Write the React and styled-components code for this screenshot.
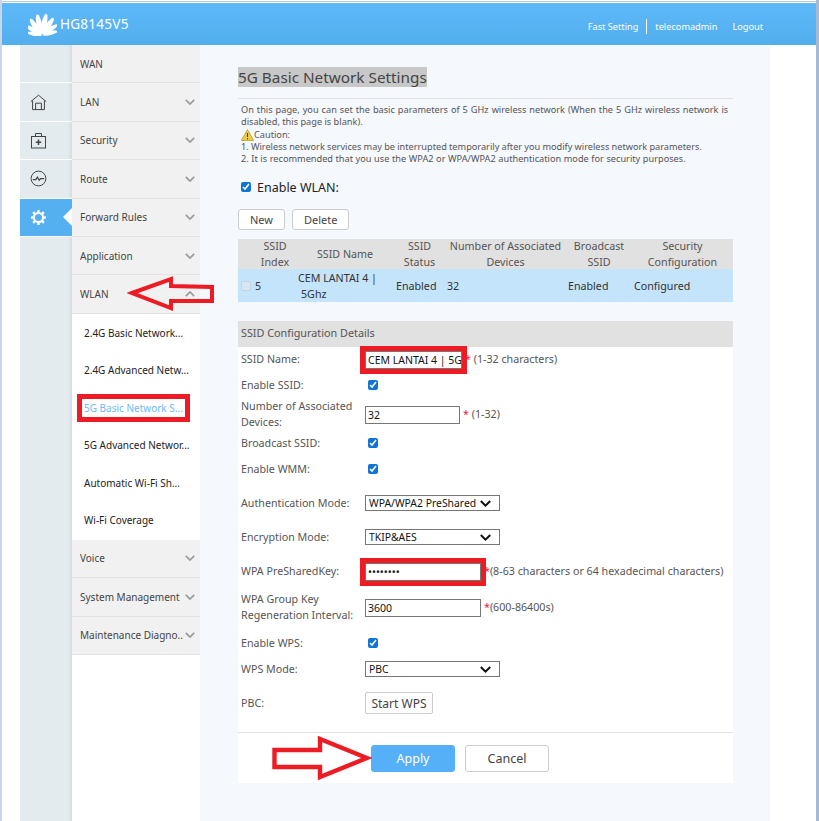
import React from 'react';
import styled, { createGlobalStyle } from 'styled-components';

const GlobalStyle = createGlobalStyle`
  html, body {
    margin: 0;
    padding: 0;
    background: #fff;
    font-family: "Noto Sans", "Open Sans", sans-serif;
  }
`;

const menuTop = [
  { label: 'WAN', plain: true },
  { label: 'LAN', icon: 'home' },
  { label: 'Security', icon: 'kit' },
  { label: 'Route', icon: 'pulse' },
  { label: 'Forward Rules', icon: 'gear', active: true },
  { label: 'Application' },
];

const subMenu = [
  { label: '2.4G Basic Network...' },
  { label: '2.4G Advanced Netw...' },
  { label: '5G Basic Network S...', current: true },
  { label: '5G Advanced Networ...' },
  { label: 'Automatic Wi-Fi Sh...' },
  { label: 'Wi-Fi Coverage' },
];

const menuBottom = ['Voice', 'System Management', 'Maintenance Diagno..'];

const gearTeeth = [0, 45, 90, 135, 180, 225, 270, 315];

function Logo() {
  const petals = [
    { angle: -12, len: 1 },
    { angle: 12, len: 1 },
    { angle: -34, len: 0.95 },
    { angle: 34, len: 0.95 },
    { angle: -56, len: 0.84 },
    { angle: 56, len: 0.84 },
    { angle: -76, len: 0.7 },
    { angle: 76, len: 0.7 },
  ];
  return (
    <LogoSvg viewBox="0 0 30 23">
      {petals.map(p => (
        <path
          key={p.angle}
          d="M15 22C11 17 10.200 7 13 1 14 0 15.400.4 15.800 2 17.400 9 17.400 17 15 22Z"
          fill="#fff"
          transform={`translate(15 23) rotate(${p.angle}) scale(${p.len}) translate(-15 -23)`}
        />
      ))}
    </LogoSvg>
  );
}

function RailIcon({ name }) {
  if (name === 'gear') {
    return (
      <svg width="17" height="17" viewBox="0 0 17 17" fill="none" stroke="#fff">
        <circle cx="8.500" cy="8.500" r="4.600" strokeWidth="2" />
        {gearTeeth.map(a => (
          <path key={a} d="M8.500 1v2.600" strokeWidth="2.400" transform={`rotate(${a} 8.500 8.500)`} />
        ))}
      </svg>
    );
  }
  return (
    <svg width="17" height="17" viewBox="0 0 17 17" fill="none" stroke="#444" strokeWidth="1">
      {name === 'home' && (
        <>
          <path d="M.8 7.600 8.500 1.200l7.700 6.400" />
          <path d="M2.600 6.600v9h11.800v-9" />
          <path d="M5.600 15.600V9.200h5.800v6.400" />
        </>
      )}
      {name === 'kit' && (
        <>
          <rect x="1.500" y="4.500" width="14" height="11.500" />
          <path d="M5.500 4.500V1.500h6v3" />
          <path d="M8.500 7.600v5.400M5.800 10.300h5.400" strokeWidth="1.500" />
        </>
      )}
      {name === 'pulse' && (
        <>
          <circle cx="8.500" cy="8.500" r="7.400" />
          <path d="M2.800 9.600h3l1.600-2.400 1.800 3 1.400-1.600h3.600" strokeWidth="1.200" />
        </>
      )}
    </svg>
  );
}

function Chevron({ up }) {
  return (
    <ChevronSvg viewBox="0 0 10 6" fill="none" stroke="#9a9a9a" strokeWidth="1.700">
      <path d={up ? 'M.8 5.200 5 1l4.200 4.200' : 'M.8.8 5 5 9.200.8'} />
    </ChevronSvg>
  );
}

function MenuItem({ label, open, plain }) {
  return (
    <MenuRow>
      <span>{label}</span>
      {!plain && <Chevron up={open} />}
    </MenuRow>
  );
}

function Select({ value }) {
  return (
    <SelectBox>
      <span>{value}</span>
      <svg width="11" height="7" viewBox="0 0 11 7" fill="none" stroke="#111" strokeWidth="2">
        <path d="M.8 1 5.500 5.600 10.200 1" />
      </svg>
    </SelectBox>
  );
}

function Hint({ children }) {
  return (
    <HintText>
      <Star>*</Star>
      {children}
    </HintText>
  );
}

export default function App() {
  return (
    <Page>
      <GlobalStyle />
      <TopEdge />
      <Header>
        <Brand>
          <Logo />
          <Model>HG8145V5</Model>
        </Brand>
        <HeaderLinks>
          <HeaderLink $divided>Fast Setting</HeaderLink>
          <HeaderLink>telecomadmin</HeaderLink>
          <HeaderLink $wide>Logout</HeaderLink>
        </HeaderLinks>
      </Header>
      <Main>
        <Rail>
          {menuTop.map(item => (
            <RailRow key={item.label} $active={item.active}>
              {item.icon && <RailIcon name={item.icon} />}
              {item.active && <Notch />}
            </RailRow>
          ))}
        </Rail>
        <Menu>
          {menuTop.map(item => (
            <MenuItem key={item.label} label={item.label} plain={item.plain} />
          ))}
          <MenuItem label="WLAN" open />
          <SubList>
            {subMenu.map(item => (
              <SubRow key={item.label}>
                <SubLabel $current={item.current}>{item.label}</SubLabel>
              </SubRow>
            ))}
          </SubList>
          {menuBottom.map(label => (
            <MenuItem key={label} label={label} />
          ))}
        </Menu>
        <Content>
          <TitleBar>
            <Title>5G Basic Network Settings</Title>
          </TitleBar>
          <Notes>
            <NoteLine $spread={0.6}>
              On this page, you can set the basic parameters of 5 GHz wireless network (When the 5 GHz wireless network is
            </NoteLine>
            <NoteLine>disabled, this page is blank).</NoteLine>
            <NoteLine>
              <svg width="13" height="12" viewBox="0 0 13 12">
                <path d="M6.500.6 12.600 11.400H.4Z" fill="#f0cf46" stroke="#a98f2c" strokeWidth=".7" />
                <path d="M6.500 4v4M6.500 9v1.200" stroke="#4a3d10" strokeWidth="1.100" />
              </svg>
              Caution:
            </NoteLine>
            <NoteLine $spread={-0.2}>
              1. Wireless network services may be interrupted temporarily after you modify wireless network parameters.
            </NoteLine>
            <NoteLine $spread={0.2}>
              2. It is recommended that you use the WPA2 or WPA/WPA2 authentication mode for security purposes.
            </NoteLine>
          </Notes>
          <EnableRow>
            <Check checked readOnly />
            Enable WLAN:
          </EnableRow>
          <ActionRow>
            <SmallButton>New</SmallButton>
            <SmallButton>Delete</SmallButton>
          </ActionRow>
          <SsidTable>
            <HeadCell $first>SSID<br />Index</HeadCell>
            <HeadCell>SSID Name</HeadCell>
            <HeadCell>SSID<br />Status</HeadCell>
            <HeadCell>Number of Associated<br />Devices</HeadCell>
            <HeadCell>Broadcast<br />SSID</HeadCell>
            <HeadCell>Security<br />Configuration</HeadCell>
            <IndexCell>
              <RowCheck />5
            </IndexCell>
            <BodyCell>
              CEM LANTAI 4 |<br />
              <Indent>5Ghz</Indent>
            </BodyCell>
            <BodyCell>Enabled</BodyCell>
            <BodyCell>32</BodyCell>
            <BodyCell>Enabled</BodyCell>
            <BodyCell>Configured</BodyCell>
          </SsidTable>
          <Panel>
            <PanelHead>SSID Configuration Details</PanelHead>
            <FormRow $h={24}>
              <FieldLabel>SSID Name:</FieldLabel>
              <TextField value="CEM LANTAI 4 | 5G" $w={97} $marked readOnly />
              <Hint>&nbsp;(1-32 characters)</Hint>
            </FormRow>
            <FormRow $h={28}>
              <FieldLabel>Enable SSID:</FieldLabel>
              <Check checked readOnly $field />
            </FormRow>
            <FormRow $h={30}>
              <FieldLabel>Number of Associated<br />Devices:</FieldLabel>
              <TextField value="32" $w={95} readOnly />
              <Hint>&nbsp;(1-32)</Hint>
            </FormRow>
            <FormRow $h={28}>
              <FieldLabel>Broadcast SSID:</FieldLabel>
              <Check checked readOnly $field />
            </FormRow>
            <FormRow $h={24}>
              <FieldLabel>Enable WMM:</FieldLabel>
              <Check checked readOnly $field />
            </FormRow>
            <FormRow $h={34} $gap={5}>
              <FieldLabel>Authentication Mode:</FieldLabel>
              <Select value="WPA/WPA2 PreShared" />
            </FormRow>
            <FormRow $h={34}>
              <FieldLabel>Encryption Mode:</FieldLabel>
              <Select value="TKIP&AES" />
            </FormRow>
            <FormRow $h={34}>
              <FieldLabel>WPA PreSharedKey:</FieldLabel>
              <TextField type="password" value="12345678" $w={116} $marked readOnly />
              <Hint>(8-63 characters or 64 hexadecimal characters)</Hint>
            </FormRow>
            <FormRow $h={38}>
              <FieldLabel>WPA Group Key<br />Regeneration Interval:</FieldLabel>
              <TextField value="3600" $w={116} readOnly />
              <Hint>(600-86400s)</Hint>
            </FormRow>
            <FormRow $h={34}>
              <FieldLabel>Enable WPS:</FieldLabel>
              <Check checked readOnly $field />
            </FormRow>
            <FormRow $h={18}>
              <FieldLabel>WPS Mode:</FieldLabel>
              <Select value="PBC" />
            </FormRow>
            <FormRow $h={34} $gap={8}>
              <FieldLabel>PBC:</FieldLabel>
              <WpsButton>Start WPS</WpsButton>
            </FormRow>
            <PanelFoot>
              <MainButton $primary>Apply</MainButton>
              <MainButton>Cancel</MainButton>
            </PanelFoot>
          </Panel>
        </Content>
        <Aside />
      </Main>
      <LeftArrow viewBox="0 0 88 35" fill="none" stroke="#ed1c24" strokeWidth="4">
        <path d="M5 17 44 3v7l41 1v14H44v7Z" />
      </LeftArrow>
      <RightArrow viewBox="0 0 100 44" fill="none" stroke="#ed1c24" strokeWidth="4.400">
        <path d="M2.500 14H48V3l47 19-47 19V31H2.500Z" />
      </RightArrow>
      <EdgeTick />
    </Page>
  );
}

const Page = styled.div`
  position: relative;
  width: 819px;
  height: 821px;
  overflow: hidden;
  box-sizing: border-box;
  border-left: 2px solid #c9d6ea;
  border-right: 3px solid #a9b9d2;
  display: flex;
  flex-direction: column;
  color: #444;
`;

const TopEdge = styled.div`
  height: 3px;
  flex-shrink: 0;
  background: linear-gradient(#fff 1px, #c6c6c6 1px, #c6c6c6 2px, #fff 2px);
`;

const Header = styled.header`
  height: 42px;
  flex-shrink: 0;
  display: flex;
  align-items: center;
  justify-content: space-between;
  padding: 0 0 0 26px;
  background: linear-gradient(#5db9f9, #52aeed);
  color: #fff;
`;

const Brand = styled.div`
  display: flex;
  align-items: center;
  gap: 3px;
`;

const LogoSvg = styled.svg`
  width: 29px;
  height: 23px;
  display: block;
`;

const Model = styled.div`
  font-size: 13.600px;
  line-height: 18px;
  letter-spacing: 0.2px;
`;

const HeaderLinks = styled.nav`
  display: flex;
  align-items: center;
  padding: 4px 53px 0 0;
`;

const HeaderLink = styled.a`
  font-size: 9.200px;
  line-height: 15px;
  padding: 0 ${props => (props.$divided ? '8px' : '0')} 0 ${props => (props.$wide ? '15px' : '0')};
  margin-right: ${props => (props.$divided ? '8px' : '0')};
  border-right: ${props => (props.$divided ? '1px solid #fff' : 'none')};
`;

const Main = styled.div`
  flex: 1;
  display: flex;
  padding-left: 18px;
  min-height: 0;
`;

const Rail = styled.div`
  width: 52px;
  flex-shrink: 0;
  background: linear-gradient(90deg, #e4ebef 48px, #d5dbe0);
`;

const RailRow = styled.div`
  position: relative;
  height: 38.400px;
  box-sizing: border-box;
  display: flex;
  align-items: center;
  padding-left: 10px;
  border-bottom: 1px solid #fff;
  background: ${props => (props.$active ? '#55b0f2' : 'transparent')};
  &:last-child {
    background: none;
    border-bottom: 0;
  }
`;

const Notch = styled.span`
  position: absolute;
  right: 0;
  top: 9px;
  border: 9px solid transparent;
  border-left: 0;
  border-right-color: #fff;
`;

const Menu = styled.div`
  width: 128px;
  flex-shrink: 0;
  background: #fff;
`;

const MenuRow = styled.div`
  height: 38.400px;
  box-sizing: border-box;
  display: flex;
  align-items: center;
  justify-content: space-between;
  padding: 0 5px 0 8px;
  background: #f1f1f1;
  border-bottom: 1px solid #e3e3e3;
  font-size: 10px;
  color: #444;
  white-space: nowrap;
`;

const ChevronSvg = styled.svg`
  width: 10px;
  height: 6px;
  flex-shrink: 0;
`;

const SubList = styled.div`
  padding: 0.5px 0 0.5px;
`;

const SubRow = styled.div`
  height: 37.500px;
  box-sizing: border-box;
  display: flex;
  align-items: center;
  padding: 0 0 0 12px;
  font-size: 10px;
  white-space: nowrap;
`;

const SubLabel = styled.span`
  color: ${props => (props.$current ? '#6cb9f6' : '#222')};
  outline: ${props => (props.$current ? '5px solid #ed1c24' : 'none')};
  outline-offset: 2px;
  line-height: 14px;
`;

const Content = styled.main`
  width: 570px;
  flex-shrink: 0;
  box-sizing: border-box;
  padding: 0 37px 0 38px;
  background: #f5f8fd;
`;

const Aside = styled.div`
  flex: 1;
  background: #fff;
`;

const TitleBar = styled.div`
  padding: 22px 0 10px;
  border-bottom: 1px solid #e2e2e2;
  line-height: 20px;
  height: 21px;
`;

const Title = styled.span`
  display: inline-block;
  font-size: 15.300px;
  line-height: 20px;
  background: #c8c8c8;
  color: #444;
`;

const Notes = styled.div`
  padding: 5px 0 0 3px;
  font-size: 9.200px;
  color: #555;
  white-space: nowrap;
`;

const NoteLine = styled.div`
  height: 12.300px;
  line-height: 12.300px;
  display: flex;
  align-items: center;
  word-spacing: ${props => props.$spread || 0}px;
  svg {
    display: block;
    flex-shrink: 0;
  }
`;

const EnableRow = styled.label`
  display: flex;
  align-items: center;
  gap: 6px;
  margin-top: 12px;
  padding-left: 3px;
  height: 20px;
  font-size: 12.500px;
  color: #222;
`;

const Check = styled.input.attrs({ type: 'checkbox' })`
  width: 10px;
  height: 10px;
  margin: 0 0 0 ${props => (props.$field ? '3px' : '0')};
  accent-color: #0f74d4;
  flex-shrink: 0;
`;

const ActionRow = styled.div`
  display: flex;
  gap: 7px;
  margin-top: 12px;
`;

const SmallButton = styled.button`
  height: 21px;
  padding: 0 11px;
  box-sizing: border-box;
  background: #fff;
  border: 1px solid #ccc;
  border-radius: 3px;
  font: 11px "Noto Sans", sans-serif;
  color: #444;
`;

const SsidTable = styled.div`
  display: grid;
  grid-template-columns: 58px 98px 51px 121px 66px 101px;
  grid-template-rows: 30px 33px;
  margin-top: 9px;
  font-size: 10.700px;
`;

const HeadCell = styled.div`
  display: flex;
  align-items: center;
  justify-content: center;
  text-align: center;
  padding-left: ${props => (props.$first ? '16px' : '0')};
  background: #e1e1e1;
  color: #555;
  line-height: 16px;
  white-space: nowrap;
`;

const BodyCell = styled.div`
  padding-left: 2px;
  align-self: stretch;
  display: flex;
  flex-direction: column;
  justify-content: center;
  background: #c4e4fb;
  color: #333;
  line-height: 16px;
  white-space: nowrap;
`;

const IndexCell = styled(BodyCell)`
  flex-direction: row;
  align-items: center;
  justify-content: flex-start;
  padding-left: 3px;
`;

const RowCheck = styled.span`
  width: 8px;
  height: 8px;
  margin-right: 4px;
  background: #d7e6f1;
  border: 1px solid #c8d4dd;
  border-radius: 2px;
`;

const Indent = styled.span`
  padding-left: 3px;
`;

const Panel = styled.section`
  margin-top: 19px;
  background: #fff;
  padding-bottom: 11px;
`;

const PanelHead = styled.div`
  height: 26px;
  box-sizing: border-box;
  display: flex;
  align-items: center;
  padding: 0 0 4px 3px;
  background: #e1e1e1;
  font-size: 10.800px;
  color: #555;
`;

const FormRow = styled.div`
  height: ${props => props.$h}px;
  margin-top: ${props => props.$gap || 0}px;
  display: flex;
  align-items: center;
  padding-left: 3px;
  font-size: 10.700px;
`;

const FieldLabel = styled.div`
  width: 124px;
  flex-shrink: 0;
  line-height: 16px;
  color: #555;
  white-space: nowrap;
`;

const TextField = styled.input`
  width: ${props => props.$w}px;
  height: 18px;
  box-sizing: border-box;
  margin: 1px 0 0;
  padding: 0 0 0 2px;
  border: 1px solid #767676;
  background: #fff;
  font: 10.500px "Noto Sans", sans-serif;
  color: #111;
  outline: ${props => (props.$marked ? '5px solid #ed1c24' : 'none')};
`;

const HintText = styled.span`
  color: #555;
  white-space: nowrap;
`;

const Star = styled.span`
  color: #e4174f;
  margin-left: 3px;
`;

const SelectBox = styled.div`
  width: 135px;
  height: 16px;
  box-sizing: border-box;
  display: flex;
  align-items: center;
  justify-content: space-between;
  padding: 0 8px 0 3px;
  border: 1px solid #767676;
  background: #fff;
  color: #111;
  font-size: 10.400px;
  white-space: nowrap;
`;

const WpsButton = styled.button`
  width: 68px;
  height: 22px;
  padding: 0;
  background: #fff;
  border: 1px solid #ccc;
  border-radius: 2px;
  font: 12px "Noto Sans", sans-serif;
  color: #444;
`;

const PanelFoot = styled.div`
  margin-top: 12px;
  padding: 12px 0 0 133px;
  display: flex;
  gap: 10px;
  border-top: 1px solid #e2e2e2;
`;

const MainButton = styled.button`
  width: 84px;
  height: 27px;
  padding: 0;
  box-sizing: border-box;
  border-radius: 3px;
  border: 1px solid ${props => (props.$primary ? '#56b0f7' : '#ccc')};
  background: ${props => (props.$primary ? '#56b0f7' : '#fff')};
  color: ${props => (props.$primary ? '#fff' : '#444')};
  font: 12.500px "Noto Sans", sans-serif;
`;

const LeftArrow = styled.svg`
  position: absolute;
  left: 125px;
  top: 276px;
  width: 88px;
  height: 35px;
`;

const RightArrow = styled.svg`
  position: absolute;
  left: 270px;
  top: 736px;
  width: 100px;
  height: 44px;
`;

const EdgeTick = styled.div`
  position: absolute;
  right: -3px;
  top: 415px;
  width: 3px;
  height: 5px;
  box-sizing: border-box;
  background: #fff;
  border: 1px solid #444;
`;
